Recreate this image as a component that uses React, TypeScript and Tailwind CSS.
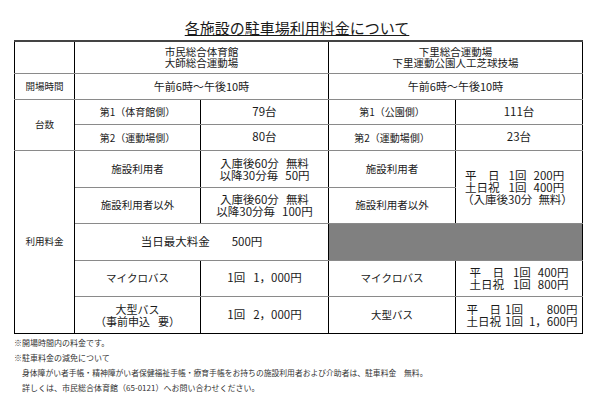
import React from 'react';

const cell =
  'border border-x-black border-y-[#8a8a8a] text-center align-middle p-0 whitespace-nowrap';

function Gap2({ a, b, gap }: { a: string; b: string; gap: string }) {
  return (
    <div className="flex justify-center">
      <span>{a}</span>
      <span className={gap}>{b}</span>
    </div>
  );
}

function FeeLine({ head, unit, price }: { head: 'weekday' | 'holiday'; unit: string; price: string }) {
  return (
    <div className="flex">
      {head === 'weekday' ? (
        <span className="w-[34.5px] flex justify-between">
          <span>平</span>
          <span>日</span>
        </span>
      ) : (
        <span>土日祝</span>
      )}
      <span className="ml-[9px]">{unit}</span>
      <span className="ml-[7px]">{price}</span>
    </div>
  );
}

export default function App() {
  return (
    <div
      className="w-[600px] h-[402px] bg-white text-[#1a1a1a] overflow-hidden"
      style={{ fontFamily: '"Noto Sans CJK JP", "Noto Sans", sans-serif' }}
    >
      {/* Title */}
      <div className="pt-[19px] h-[40px] flex justify-center">
        <h1 className="text-[15px] leading-[18px] underline underline-offset-[1px] decoration-1 mr-[6px] font-normal">
          各施設の駐車場利用料金について
        </h1>
      </div>

      <table className="ml-[14px] w-[568px] border-collapse table-fixed border-t-2 border-t-[#444] border-b border-b-black">
        <colgroup>
          <col className="w-[60px]" />
          <col className="w-[126px]" />
          <col className="w-[128px]" />
          <col className="w-[127px]" />
          <col className="w-[127px]" />
        </colgroup>
        <tbody>
          <tr className="h-[32px]">
            <td className={`${cell} border-t-[#444]`}></td>
            <td colSpan={2} className={`${cell} border-t-[#444] text-[10.5px] leading-[11.5px]`}>
              <div>市民総合体育館</div>
              <div>大師総合運動場</div>
            </td>
            <td colSpan={2} className={`${cell} border-t-[#444] text-[10.5px] leading-[11.5px]`}>
              <div>下里総合運動場</div>
              <div>下里運動公園人工芝球技場</div>
            </td>
          </tr>
          <tr className="h-[26px]">
            <td className={`${cell} text-[9.5px]`}>開場時間</td>
            <td colSpan={2} className={`${cell} text-[11px]`}>午前6時～午後10時</td>
            <td colSpan={2} className={`${cell} text-[11px]`}>午前6時～午後10時</td>
          </tr>
          <tr className="h-[25px]">
            <td rowSpan={2} className={`${cell} text-[9.5px]`}>台数</td>
            <td className={`${cell} text-[10px]`}>第1（体育館側）</td>
            <td className={`${cell} text-[11.5px]`}>79台</td>
            <td className={`${cell} text-[10px]`}>第1（公園側）</td>
            <td className={`${cell} text-[11.5px]`}>111台</td>
          </tr>
          <tr className="h-[26px]">
            <td className={`${cell} text-[10px]`}>第2（運動場側）</td>
            <td className={`${cell} text-[11.5px]`}>80台</td>
            <td className={`${cell} text-[10px]`}>第2（運動場側）</td>
            <td className={`${cell} text-[11.5px]`}>23台</td>
          </tr>
          <tr className="h-[37px]">
            <td rowSpan={6} className={`${cell} text-[9.5px] border-b-black`}>利用料金</td>
            <td className={`${cell} text-[10.5px]`}>施設利用者</td>
            <td className={`${cell} text-[11.5px] leading-[12px]`}>
              <Gap2 a="入庫後60分" b="無料" gap="ml-[7px]" />
              <Gap2 a="以降30分毎" b="50円" gap="ml-[7px]" />
            </td>
            <td className={`${cell} text-[10.5px]`}>施設利用者</td>
            <td rowSpan={2} className={`${cell} text-[11.5px] leading-[12px]`}>
              <div className="inline-block text-left">
                <FeeLine head="weekday" unit="1回" price="200円" />
                <FeeLine head="holiday" unit="1回" price="400円" />
                <div className="flex -ml-[3px]">
                  <span>（入庫後30分</span>
                  <span className="ml-[6px]">無料）</span>
                </div>
              </div>
            </td>
          </tr>
          <tr className="h-[36px]">
            <td className={`${cell} text-[10.5px]`}>施設利用者以外</td>
            <td className={`${cell} text-[11.5px] leading-[12px]`}>
              <Gap2 a="入庫後60分" b="無料" gap="ml-[7px]" />
              <Gap2 a="以降30分毎" b="100円" gap="ml-[7px]" />
            </td>
            <td className={`${cell} text-[10.5px]`}>施設利用者以外</td>
          </tr>
          <tr className="h-[37px]">
            <td colSpan={2} className={`${cell} text-[11.5px]`}>
              <Gap2 a="当日最大料金" b="500円" gap="ml-[22px]" />
            </td>
            <td colSpan={2} className={`${cell} bg-[#808080] border-y-[#6a6a6a]`}></td>
          </tr>
          <tr className="h-[36px]">
            <td className={`${cell} text-[10.5px]`}>マイクロバス</td>
            <td className={`${cell} text-[11.5px]`}>
              <Gap2 a="1回" b="1，000円" gap="ml-[8px]" />
            </td>
            <td className={`${cell} text-[10.5px]`}>マイクロバス</td>
            <td className={`${cell} text-[11.5px] leading-[12px]`}>
              <div className="inline-block text-left">
                <FeeLine head="weekday" unit="1回" price="400円" />
                <FeeLine head="holiday" unit="1回" price="800円" />
              </div>
            </td>
          </tr>
          <tr className="h-[37px]">
            <td className={`${cell} text-[11px] leading-[12px] border-b-black`}>
              <div>大型バス</div>
              <Gap2 a="（事前申込" b="要）" gap="ml-[8px]" />
            </td>
            <td className={`${cell} text-[11.5px] border-b-black`}>
              <Gap2 a="1回" b="2，000円" gap="ml-[8px]" />
            </td>
            <td className={`${cell} text-[10.5px] border-b-black`}>大型バス</td>
            <td className={`${cell} text-[11.5px] leading-[12px] border-b-black`}>
              <div className="inline-block w-[111px] ml-[6px] text-left">
                <div className="flex">
                  <span className="w-[34.5px] flex justify-between">
                    <span>平</span>
                    <span>日</span>
                  </span>
                  <span className="ml-[4px]">1回</span>
                  <span className="ml-auto">800円</span>
                </div>
                <div className="flex">
                  <span>土日祝</span>
                  <span className="ml-[4px]">1回</span>
                  <span className="ml-auto">1，600円</span>
                </div>
              </div>
            </td>
          </tr>
        </tbody>
      </table>

      {/* Notes */}
      <div className="ml-[14px] mt-[1px] text-[8px] leading-[15px] text-[#333]">
        <p>※開場時間内の料金です。</p>
        <p>※駐車料金の減免について</p>
        <p className="pl-[8px] text-[7.8px]">
          身体障がい者手帳・精神障がい者保健福祉手帳・療育手帳をお持ちの施設利用者および介助者は、駐車料金　無料。
        </p>
        <p className="pl-[8px]">詳しくは、市民総合体育館（65-0121）へお問い合わせください。</p>
      </div>
    </div>
  );
}
